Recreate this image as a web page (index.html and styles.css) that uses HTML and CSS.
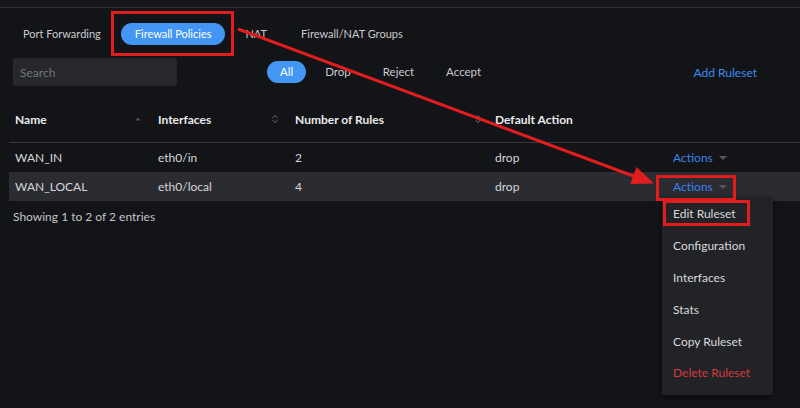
FILE: index.html
```html
<!DOCTYPE html>
<html lang="en">
<head>
    <meta charset="UTF-8">
    <meta name="viewport" content="width=device-width, initial-scale=1.0">
    <title>Firewall Policies</title>
    <link rel="stylesheet" href="styles.css">
</head>
<body>
    <div class="page">
        <div class="topbar"></div>
        <nav class="tabs">
            <a class="tab">Port Forwarding</a>
            <a class="tab active">Firewall Policies</a>
            <a class="tab">NAT</a>
            <a class="tab">Firewall/NAT Groups</a>
        </nav>
        <div class="toolbar">
            <input class="search" type="text" placeholder="Search">
            <div class="filters">
                <span class="filter active">All</span>
                <span class="filter">Drop</span>
                <span class="filter">Reject</span>
                <span class="filter">Accept</span>
            </div>
            <a class="add-btn">Add Ruleset</a>
        </div>
        <table class="rules">
            <thead>
                <tr>
                    <th class="col-name">Name
                        <svg class="sort" width="8" height="10" viewBox="0 0 8 10"><path d="M1 6.5 L4 3.5 L7 6.5 Z" fill="#4a4c51"/></svg>
                    </th>
                    <th class="col-if">Interfaces
                        <svg class="sort" width="8" height="10" viewBox="0 0 8 10"><path d="M1.5 4 L4 1.5 L6.5 4 M1.5 6 L4 8.5 L6.5 6" fill="none" stroke="#4a4c51" stroke-width="1.2"/></svg>
                    </th>
                    <th class="col-count">Number of Rules
                        <svg class="sort" width="8" height="10" viewBox="0 0 8 10"><path d="M1.5 4 L4 1.5 L6.5 4 M1.5 6 L4 8.5 L6.5 6" fill="none" stroke="#4a4c51" stroke-width="1.2"/></svg>
                    </th>
                    <th class="col-default">Default Action</th>
                    <th class="col-actions"></th>
                </tr>
            </thead>
            <tbody>
                <tr>
                    <td>WAN_IN</td>
                    <td>eth0/in</td>
                    <td>2</td>
                    <td>drop</td>
                    <td><a class="actions">Actions <span class="caret"></span></a></td>
                </tr>
                <tr class="selected">
                    <td>WAN_LOCAL</td>
                    <td>eth0/local</td>
                    <td>4</td>
                    <td>drop</td>
                    <td class="menu-cell">
                        <a class="actions">Actions <span class="caret"></span></a>
                        <ul class="menu">
                            <li>Edit Ruleset</li>
                            <li>Configuration</li>
                            <li>Interfaces</li>
                            <li>Stats</li>
                            <li>Copy Ruleset</li>
                            <li class="danger">Delete Ruleset</li>
                        </ul>
                    </td>
                </tr>
            </tbody>
        </table>
        <div class="info">Showing 1 to 2 of 2 entries</div>

        <!-- markup on top of the page: boxes and arrow -->
        <svg class="marks" width="800" height="408" viewBox="0 0 800 408">
            <g fill="none" stroke="#e11d1d" stroke-width="3">
                <rect x="112.5" y="12.5" width="120" height="42"/>
                <rect x="657.5" y="176.5" width="77" height="23"/>
                <rect x="664.5" y="201.5" width="84" height="23"/>
                <line x1="238" y1="29" x2="636" y2="177"/>
            </g>
            <polygon points="654,183.5 636.5,167 630.3,184" fill="#e11d1d"/>
        </svg>
    </div>
</body>
</html>
```

FILE: styles.css
```css
body {
    margin: 0px;
    padding: 0px;
    background-color: #131417;
    font-family: Lato, "Noto Sans", sans-serif;
    font-size: 12px;
    color: #d6d7da;
}
.page {
    position: relative;
    width: 800px;
    height: 408px;
    overflow: hidden;
}
.topbar {
    height: 7px;
    background-color: #151619;
    border-bottom: 1px solid #2e3034;
}
.tabs {
    display: flex;
    gap: 6px;
    padding: 15px 0px 0px 9px;
    font-size: 11px;
}
.tab {
    height: 22px;
    line-height: 22px;
    padding: 0px 14px;
    border-radius: 11px;
    color: #c9cacd;
    cursor: pointer;
}
.tab.active {
    background-color: #4396f4;
    color: #ffffff;
}
.toolbar {
    display: flex;
    align-items: center;
    margin-top: 13px;
    padding: 0px 43px 0px 13px;
}
.search {
    width: 164px;
    height: 28px;
    box-sizing: border-box;
    border: none;
    border-radius: 3px;
    background-color: #26282c;
    padding: 0px 7px;
    font-family: inherit;
    font-size: 12px;
    color: #d6d7da;
}
.search::placeholder {
    color: #74767b;
}
.filters {
    display: flex;
    gap: 6px;
    margin-left: 90px;
    font-size: 11.5px;
}
.filter {
    height: 22px;
    line-height: 22px;
    padding: 0px 13px;
    border-radius: 11px;
    color: #c9cacd;
}
.filter.active {
    background-color: #4396f4;
    color: #ffffff;
}
.add-btn {
    margin-left: auto;
    color: #3f8bf0;
    cursor: pointer;
}
.rules {
    border-collapse: collapse;
    margin: 10px 0px 0px 9px;
    width: 791px;
    table-layout: fixed;
}
.rules th {
    position: relative;
    height: 46px;
    padding: 0px 6px;
    text-align: left;
    font-weight: 700;
    color: #e9eaec;
    border-bottom: 1px solid #35373b;
}
.col-name { width: 131px; }
.col-if { width: 125px; }
.col-count { width: 188px; }
.col-default { width: 166px; }
.sort {
    position: absolute;
    right: 10px;
    top: 18px;
}
.col-count .sort {
    right: 7px;
}
.rules td {
    height: 29px;
    padding: 0px 6px;
    color: #d6d7da;
}
.rules tr.selected td {
    background-color: #2a2c31;
}
.actions {
    color: #3c82e8;
    cursor: pointer;
}
.caret {
    display: inline-block;
    width: 0px;
    height: 0px;
    margin-left: 3px;
    vertical-align: 2px;
    border-left: 4px solid transparent;
    border-right: 4px solid transparent;
    border-top: 4px solid #55575c;
}
.menu-cell {
    position: relative;
}
.menu {
    position: absolute;
    left: -5px;
    top: 25px;
    width: 111px;
    margin: 0px;
    padding: 1px 0px 5px;
    list-style: none;
    background-color: #222327;
    border-radius: 2px;
    box-shadow: 0px 2px 6px rgba(0, 0, 0, 0.5);
    z-index: 2;
}
.menu li {
    height: 32px;
    line-height: 32px;
    padding-left: 11px;
    color: #d8d9dc;
}
.menu li:last-child {
    line-height: 30px;
}
.menu li.danger {
    color: #d43a3f;
}
.info {
    margin: 8px 0px 0px 13px;
    color: #c3c5c8;
}
.marks {
    position: absolute;
    left: 0px;
    top: 0px;
    pointer-events: none;
    z-index: 3;
}
```
